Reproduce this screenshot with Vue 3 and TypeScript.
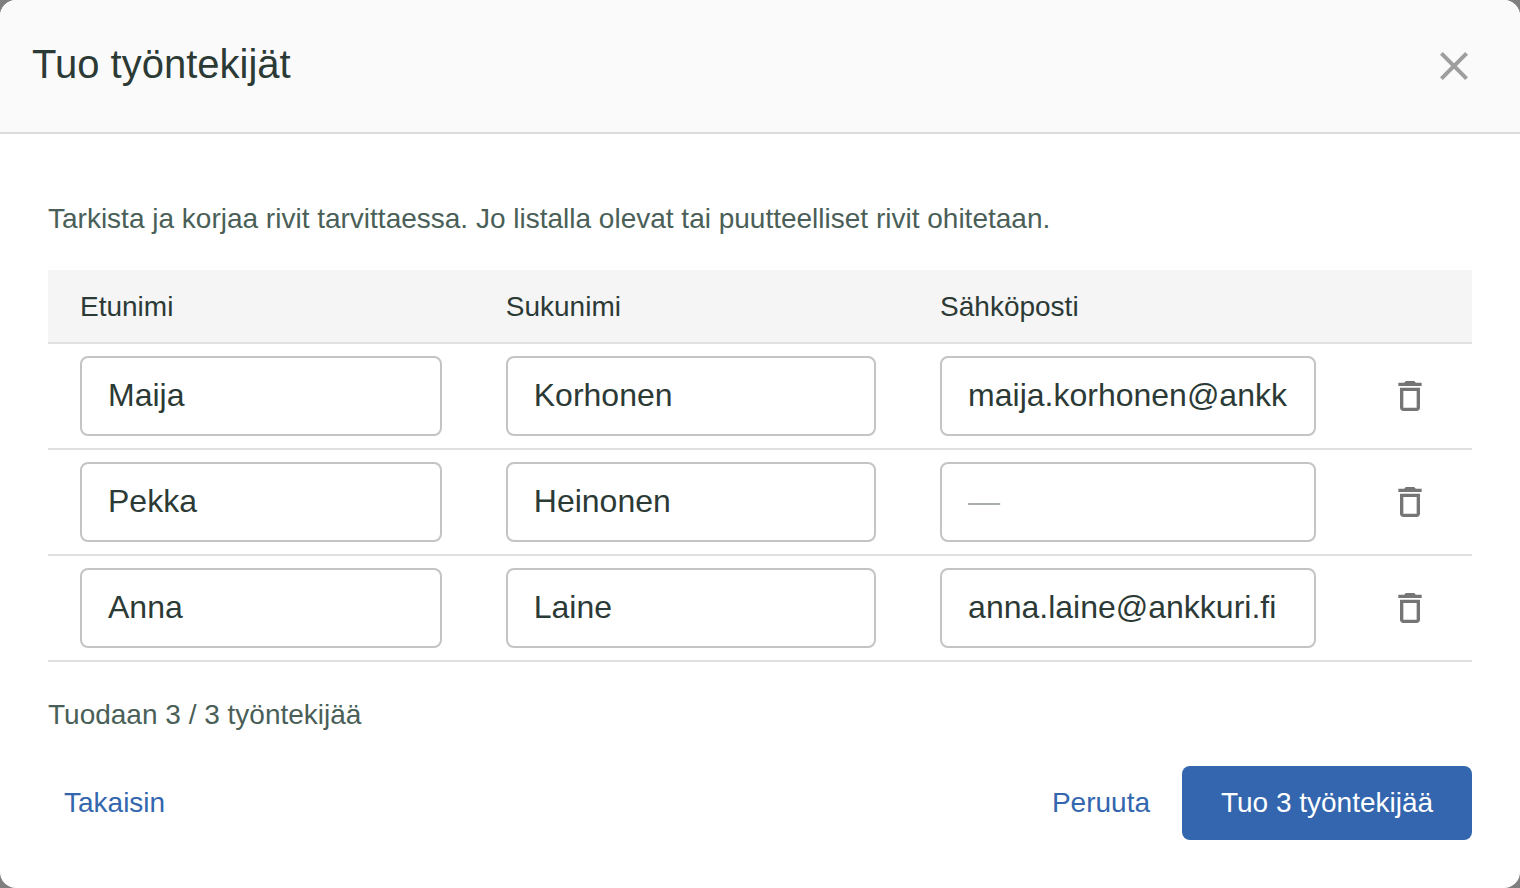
<script setup lang="ts">
import { computed, ref } from 'vue'

interface Employee {
  id: number
  firstName: string
  lastName: string
  email: string
}

type Field = 'firstName' | 'lastName' | 'email'

const columns: { field: Field; label: string; type: string }[] = [
  { field: 'firstName', label: 'Etunimi', type: 'text' },
  { field: 'lastName', label: 'Sukunimi', type: 'text' },
  { field: 'email', label: 'Sähköposti', type: 'email' },
]

const rows = ref<Employee[]>([
  { id: 1, firstName: 'Maija', lastName: 'Korhonen', email: 'maija.korhonen@ankkuri.fi' },
  { id: 2, firstName: 'Pekka', lastName: 'Heinonen', email: '' },
  { id: 3, firstName: 'Anna', lastName: 'Laine', email: 'anna.laine@ankkuri.fi' },
])

const validCount = computed(
  () => rows.value.filter((row) => row.firstName.trim() && row.lastName.trim()).length,
)

function removeRow(id: number): void {
  rows.value = rows.value.filter((row) => row.id !== id)
}
</script>

<template>
  <div class="backdrop">
    <section class="dialog" role="dialog" aria-modal="true" aria-labelledby="dialog-title">
      <header class="dialog-header">
        <h1 id="dialog-title" class="title">Tuo työntekijät</h1>
        <button class="icon-button" type="button" aria-label="Sulje">
          <svg class="close-icon" viewBox="0 0 24 24" aria-hidden="true">
            <path
              d="M19 6.41L17.59 5 12 10.59 6.41 5 5 6.41 10.59 12 5 17.59 6.41 19 12 13.41 17.59 19 19 17.59 13.41 12z"
            />
          </svg>
        </button>
      </header>

      <div class="dialog-body">
        <p class="note">
          Tarkista ja korjaa rivit tarvittaessa. Jo listalla olevat tai puutteelliset rivit ohitetaan.
        </p>

        <table class="employees">
          <colgroup>
            <col class="col-first" />
            <col class="col-last" />
            <col class="col-email" />
            <col />
          </colgroup>
          <thead>
            <tr>
              <th v-for="column in columns" :id="`head-${column.field}`" :key="column.field" scope="col">
                {{ column.label }}
              </th>
              <td></td>
            </tr>
          </thead>
          <tbody>
            <tr v-for="row in rows" :key="row.id">
              <td v-for="column in columns" :key="column.field">
                <input
                  v-model="row[column.field]"
                  class="field"
                  :type="column.type"
                  :aria-labelledby="`head-${column.field}`"
                  placeholder="—"
                  autocomplete="off"
                  spellcheck="false"
                />
              </td>
              <td class="row-action">
                <button class="icon-button" type="button" aria-label="Poista rivi" @click="removeRow(row.id)">
                  <svg class="delete-icon" viewBox="0 0 24 24" aria-hidden="true">
                    <path
                      d="M6 19c0 1.1.9 2 2 2h8c1.1 0 2-.9 2-2V7H6v12zM8 9h8v10H8V9zm7.5-5l-1-1h-5l-1 1H5v2h14V4z"
                    />
                  </svg>
                </button>
              </td>
            </tr>
          </tbody>
        </table>

        <p class="note">Tuodaan {{ validCount }} / {{ rows.length }} työntekijää</p>

        <footer class="actions">
          <button class="button" type="button">Takaisin</button>
          <div class="actions-end">
            <button class="button" type="button">Peruuta</button>
            <button class="button primary" type="button">Tuo {{ validCount }} työntekijää</button>
          </div>
        </footer>
      </div>
    </section>
  </div>
</template>

<style>
body {
  margin: 0;
  background: #7f7f7f;
}
</style>

<style scoped>
.backdrop {
  display: flex;
  min-height: 100vh;
  background: #7f7f7f;
  color: #2c3a36;
  font-family: 'Liberation Sans', Arial, sans-serif;
}

.backdrop *,
.backdrop {
  box-sizing: border-box;
}

.dialog {
  flex: 1;
  min-width: 0;
  overflow: hidden;
  border-radius: 16px;
  background: #fff;
}

.dialog-header {
  display: flex;
  align-items: flex-start;
  justify-content: space-between;
  padding: 32px;
  border-bottom: 2px solid #dcdcdc;
  background: #fafafa;
}

.title {
  margin: 0;
  font-size: 40px;
  font-weight: 400;
  line-height: 64px;
}

.icon-button {
  display: inline-flex;
  padding: 10px;
  border: 0;
  border-radius: 50%;
  background: transparent;
  cursor: pointer;
}

.close-icon {
  width: 48px;
  height: 48px;
  fill: #9e9e9e;
}

.delete-icon {
  width: 40px;
  height: 40px;
  fill: #757575;
}

.dialog-body {
  padding: 64px 48px 48px;
}

.note {
  margin: 0;
  color: #4a5f58;
  font-size: 28px;
  line-height: 42px;
}

.employees {
  width: 100%;
  margin: 30px 0 32px;
  border-collapse: separate;
  border-spacing: 0;
  table-layout: fixed;
}

.col-first {
  width: 29.9%;
}

.col-last {
  width: 30.5%;
}

.col-email {
  width: 30.9%;
}

.employees th,
.employees td {
  padding: 12px 32px;
  border-bottom: 2px solid #e0e0e0;
  text-align: left;
  vertical-align: middle;
}

.employees thead th,
.employees thead td {
  padding: 16px 32px 14px;
  background: #f5f5f5;
  font-size: 28px;
  font-weight: 400;
  line-height: 42px;
}

.employees .row-action {
  padding: 12px 0;
  text-align: center;
}

.row-action .icon-button {
  vertical-align: middle;
}

.field {
  display: block;
  width: 100%;
  height: 80px;
  padding: 0 26px 2px;
  border: 2px solid #c4c4c4;
  border-radius: 8px;
  outline: 0;
  background: #fff;
  color: inherit;
  font: inherit;
  font-size: 32px;
}

.field::placeholder {
  color: #a7adab;
  opacity: 1;
}

.field:focus {
  border-color: #3366ae;
}

.actions,
.actions-end {
  display: flex;
  align-items: center;
}

.actions {
  justify-content: space-between;
  margin-top: 30px;
}

.actions-end {
  gap: 16px;
}

.button {
  padding: 12px 16px;
  border: 0;
  border-radius: 8px;
  background: transparent;
  color: #3366ae;
  font: inherit;
  font-size: 28px;
  line-height: 50px;
  cursor: pointer;
}

.primary {
  min-width: 290px;
  padding: 12px 32px;
  background: #3366ae;
  color: #fff;
}
</style>
